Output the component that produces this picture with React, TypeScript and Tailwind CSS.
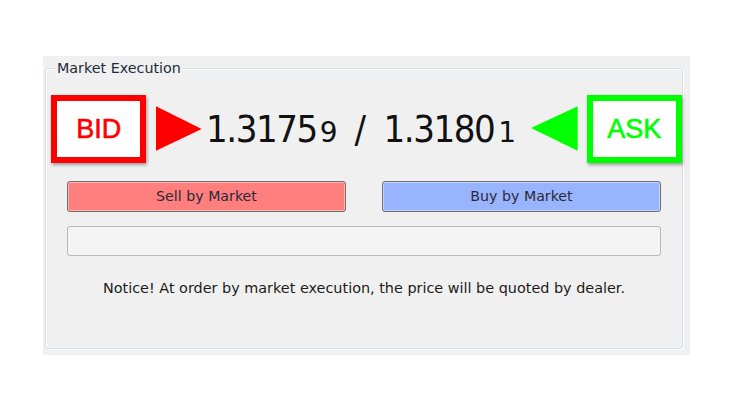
import React from "react";

export default function App() {
  return (
    <div className="w-[738px] h-[407px] bg-white pt-[56px] pl-[43px]" style={{ fontFamily: '"DejaVu Sans", Verdana, sans-serif' }}>
      <div className="w-[647px] h-[299px] bg-[#f0f0f0] pt-[12px] pl-[2px] pr-[7px] pb-[6px]">
        <div className="relative h-full rounded-[3px] border border-[#d5dfe5] shadow-[inset_1px_1px_0_#ffffff,1px_1px_0_#ffffff]">
          <span className="absolute -top-[9px] left-[9px] bg-[#f0f0f0] px-[2px] text-[14.3px] leading-[17px] text-[#1e2b3a]">
            Market Execution
          </span>

          <div className="flex items-center ml-[5px] mt-[26px] h-[68px]">
            <div className="w-[96px] h-[68px] border-[6px] border-[#ff0000] bg-white flex items-center justify-center shadow-[1px_2px_3px_rgba(0,0,0,0.35)]">
              <span className="text-[#ff0000] text-[27px] leading-none [-webkit-text-stroke:0.6px_#ff0000]" style={{ fontFamily: '"Liberation Sans", Arial, sans-serif' }}>BID</span>
            </div>
            <svg className="ml-[10px]" width="46" height="46" viewBox="0 0 46 46">
              <polygon points="0,0 46,23 0,45" fill="#ff0000" />
            </svg>
            <div className="ml-[4px] w-[320px] flex items-baseline text-[#111] text-[38px] leading-none tracking-[-1.5px]" style={{ fontFamily: '"DejaVu Sans Condensed", "DejaVu Sans", sans-serif' }}>
              <span>1.3175</span>
              <span className="text-[28px] ml-[3px] tracking-normal" style={{ fontFamily: '"DejaVu Sans", sans-serif' }}>9</span>
              <span className="ml-[17px]">/</span>
              <span className="ml-[19px]">1.3180</span>
              <span className="text-[28px] ml-[4px] tracking-normal" style={{ fontFamily: '"DejaVu Sans", sans-serif' }}>1</span>
            </div>
            <svg className="ml-[7px]" width="47" height="46" viewBox="0 0 47 46">
              <polygon points="47,0 0,22 47,45" fill="#00ff00" />
            </svg>
            <div className="ml-[9px] w-[96px] h-[68px] border-[6px] border-[#00ff00] bg-white flex items-center justify-center shadow-[1px_2px_3px_rgba(0,0,0,0.35)]">
              <span className="text-[#00ff00] text-[27px] leading-none [-webkit-text-stroke:0.6px_#00ff00]" style={{ fontFamily: '"Liberation Sans", Arial, sans-serif' }}>ASK</span>
            </div>
          </div>

          <div className="flex gap-[36px] px-[21px] mt-[18px]">
            <button className="w-[279px] h-[31px] rounded-[3px] border border-[#6f6f6f] bg-[#ff7f7f] shadow-[inset_0_0_0_1px_#ffb3b3] text-[14.2px] text-[#2a2a35]">
              Sell by Market
            </button>
            <button className="w-[279px] h-[31px] rounded-[3px] border border-[#6f6f6f] bg-[#99b4ff] shadow-[inset_0_0_0_1px_#c4d4ff] text-[14.2px] text-[#2a2a35]">
              Buy by Market
            </button>
          </div>

          <div className="mx-[21px] mt-[14px] h-[30px] rounded-[3px] border border-[#b9b9b9] bg-[#f4f4f4]" />

          <div className="mt-[22px] text-center text-[14.4px] text-[#1b1b1b]">
            Notice! At order by market execution, the price will be quoted by dealer.
          </div>
        </div>
      </div>
    </div>
  );
}
